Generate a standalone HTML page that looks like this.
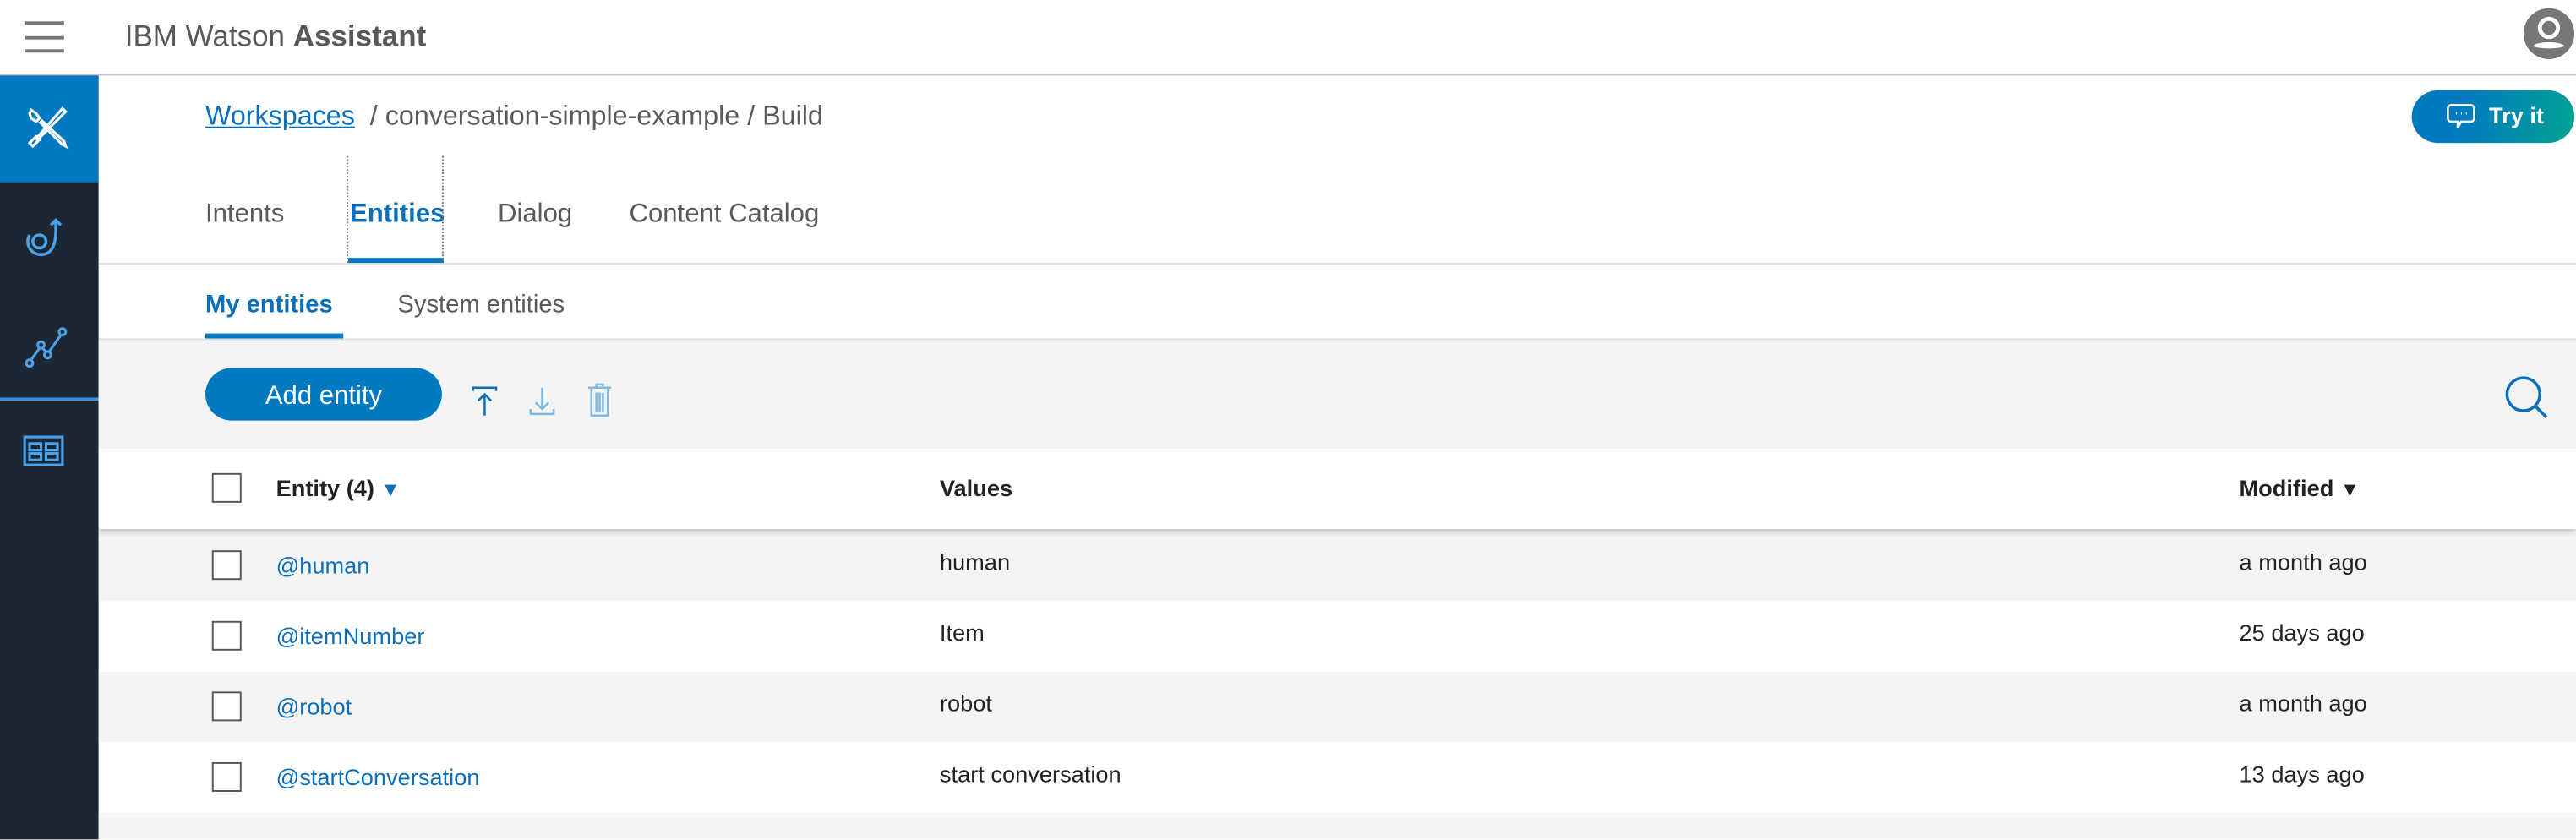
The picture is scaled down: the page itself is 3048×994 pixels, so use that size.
<!DOCTYPE html>
<html><head><meta charset="utf-8">
<style>
html,body{margin:0;padding:0;overflow:hidden;background:#fff;}
body{width:3048px;height:994px;}
#w{position:absolute;left:0;top:0;width:1568px;height:511px;transform:scale(1.94388);transform-origin:0 0;font-family:"Liberation Sans",sans-serif;color:#3d3d3d;}
.a{position:absolute;}
.t{position:absolute;white-space:nowrap;line-height:1;}
</style></head><body><div id="w">
<!-- header -->
<div class="a" style="left:0;top:0;width:1568px;height:45px;background:#fff;border-bottom:1px solid #c4c4c4;"></div>
<div class="a" style="left:15px;top:13px;width:24px;height:2px;background:#777"></div>
<div class="a" style="left:15px;top:22px;width:24px;height:2px;background:#777"></div>
<div class="a" style="left:15px;top:30px;width:24px;height:2px;background:#777"></div>
<div class="t" style="left:76px;top:13px;font-size:18px;color:#595959;">IBM Watson <b>Assistant</b></div>
<svg class="a" style="left:1536px;top:5px" width="31" height="31" viewBox="0 0 31 31"><circle cx="15.5" cy="15.5" r="15.5" fill="#777"/><circle cx="15.5" cy="12" r="5.5" fill="none" stroke="#fff" stroke-width="2.5"/><path d="M6 23c2-3 17-3 19 0c-2 2-17 2-19 0z" fill="#fff"/></svg>
<!-- sidebar -->
<div class="a" style="left:0;top:46px;width:60px;height:465px;background:#1d2733"></div>
<div class="a" style="left:0;top:46px;width:60px;height:65px;background:#0079c1"></div>
<div class="a" style="left:0;top:242px;width:60px;height:2px;background:#3c8fd6"></div>
<svg class="a" style="left:14px;top:63px" width="30" height="30" viewBox="0 0 30 30" fill="none" stroke="#fff" stroke-width="1.6"><path d="M5 4l3 2 2 3-2 2-3-2-1-3zM10 11l14 14 2 1-1-3-14-13"/><path d="M24 3l2 2-15 15-3 0 1 3-3 3-2-2 3-3 3 1 0-3z"/></svg>
<svg class="a" style="left:14px;top:130px" width="30" height="30" viewBox="0 0 30 30" fill="none" stroke="#4aa3ea" stroke-width="1.8"><circle cx="10" cy="17" r="4"/><path d="M20 10c0 10-3 15-9 15a8 8 0 0 1-7-12M20 10v-6M17 7l3-3 3 3"/></svg>
<svg class="a" style="left:14px;top:196px" width="30" height="30" viewBox="0 0 30 30" fill="none" stroke="#4aa3ea" stroke-width="1.6"><circle cx="4" cy="25" r="2"/><circle cx="11" cy="14" r="2"/><circle cx="15" cy="20" r="2"/><circle cx="24" cy="6" r="2"/><path d="M5 23l5-7M12 16l2 2M16 18l7-10"/></svg>
<svg class="a" style="left:14px;top:262px" width="26" height="26" viewBox="0 0 26 26" fill="none" stroke="#4aa3ea" stroke-width="1.6"><rect x="1" y="4" width="23" height="17"/><rect x="4" y="8" width="7" height="4"/><rect x="14" y="8" width="7" height="4"/><rect x="4" y="14" width="7" height="4"/><rect x="14" y="14" width="7" height="4"/></svg>
<!-- breadcrumb -->
<div class="t" style="left:125px;top:63px;font-size:16.6px;color:#5a5a5a;"><span style="color:#0a6fba;text-decoration:underline;">Workspaces</span>&nbsp; / conversation-simple-example / Build</div>
<div class="a" style="left:1468px;top:55px;width:99px;height:32px;border-radius:16px;background:linear-gradient(100deg,#0079c1 30%,#00a291);"></div>
<svg class="a" style="left:1489px;top:62px" width="18" height="18" viewBox="0 0 18 18" fill="none" stroke="#fff" stroke-width="1.3"><path d="M3 2h12a2 2 0 0 1 2 2v6a2 2 0 0 1-2 2H9l-2 4 0-4H3a2 2 0 0 1-2-2V4a2 2 0 0 1 2-2z"/><path d="M6 7h.5M9 7h.5M12 7h.5" stroke-width="1.5"/></svg>
<div class="t" style="left:1515px;top:63px;font-size:14px;font-weight:bold;color:#fff;">Try it</div>
<!-- tabs -->
<div class="t" style="left:125px;top:123px;font-size:16px;color:#5a5a5a;">Intents</div>
<div class="t" style="left:213px;top:123px;font-size:16px;font-weight:bold;color:#0a6fba;">Entities</div>
<div class="t" style="left:303px;top:123px;font-size:16px;color:#5a5a5a;">Dialog</div>
<div class="t" style="left:383px;top:123px;font-size:16px;color:#5a5a5a;">Content Catalog</div>
<div class="a" style="left:211px;top:95px;width:59px;height:65px;border:1px dotted #777;border-top:none;box-sizing:border-box;"></div>
<div class="a" style="left:212px;top:157px;width:58px;height:3px;background:#0079c1"></div>
<div class="a" style="left:60px;top:160px;width:1508px;height:1px;background:#dcdcdc"></div>
<div class="t" style="left:125px;top:178px;font-size:15px;font-weight:bold;color:#0a6fba;">My entities</div>
<div class="t" style="left:242px;top:178px;font-size:15px;color:#5a5a5a;">System entities</div>
<div class="a" style="left:125px;top:203px;width:84px;height:4px;background:#0079c1"></div>
<div class="a" style="left:60px;top:206px;width:1508px;height:1px;background:#dcdcdc"></div>
<!-- toolbar -->
<div class="a" style="left:60px;top:207px;width:1508px;height:66px;background:#f4f4f4"></div>
<div class="a" style="left:125px;top:224px;width:144px;height:32px;border-radius:16px;background:#0079c1"></div>
<div class="t" style="left:125px;top:234px;width:144px;text-align:center;font-size:16px;color:#fff;">Add entity</div>
<svg class="a" style="left:286px;top:234px" width="18" height="20" viewBox="0 0 18 20" fill="none" stroke="#0a6fba" stroke-width="1.3"><path d="M2 4V2h14v2M9 19V6M5 10l4-4 4 4"/></svg>
<svg class="a" style="left:321px;top:234px" width="18" height="20" viewBox="0 0 18 20" fill="none" stroke="#7fb8e0" stroke-width="1.3"><path d="M2 15v3h14v-3M9 2v13M5 11l4 4 4-4"/></svg>
<svg class="a" style="left:357px;top:232px" width="16" height="22" viewBox="0 0 16 22" fill="none" stroke="#7fb8e0" stroke-width="1.3"><path d="M1 4h14M6 4V2h4v2M3 4v17h10V4M6 7v12M8 7v12M10 7v12"/></svg>
<svg class="a" style="left:1524px;top:228px" width="28" height="28" viewBox="0 0 28 28" fill="none" stroke="#0a6fba" stroke-width="1.8"><circle cx="12" cy="12" r="10"/><path d="M19 19l7 7"/></svg>
<!-- table header -->
<div class="a" style="left:60px;top:273px;width:1508px;height:49px;background:#fff;box-shadow:0 2px 3px rgba(0,0,0,0.18);z-index:2"></div>
<div class="a" style="left:129px;top:288px;width:18px;height:18px;border:1.5px solid #555;box-sizing:border-box;background:#fff;z-index:3"></div>
<div class="t" style="left:168px;top:290px;font-size:14px;font-weight:bold;color:#222;z-index:3">Entity (4) <span style="color:#0a6fba;font-size:12px;">&#9660;</span></div>
<div class="t" style="left:572px;top:290px;font-size:14px;font-weight:bold;color:#222;z-index:3">Values</div>
<div class="t" style="left:1363px;top:290px;font-size:14px;font-weight:bold;color:#222;z-index:3">Modified <span style="font-size:12px;">&#9660;</span></div>
<!-- rows -->
<div class="a" style="left:60px;top:322px;width:1508px;height:44px;background:#f4f4f4"></div>
<div class="a" style="left:60px;top:409px;width:1508px;height:43px;background:#f4f4f4"></div>
<div class="a" style="left:60px;top:495px;width:1508px;height:16px;background:#f4f4f4"></div>
<div class="a" style="left:129px;top:335px;width:18px;height:18px;border:1.5px solid #555;box-sizing:border-box;background:#fff"></div>
<div class="a" style="left:129px;top:378px;width:18px;height:18px;border:1.5px solid #555;box-sizing:border-box;background:#fff"></div>
<div class="a" style="left:129px;top:421px;width:18px;height:18px;border:1.5px solid #555;box-sizing:border-box;background:#fff"></div>
<div class="a" style="left:129px;top:464px;width:18px;height:18px;border:1.5px solid #555;box-sizing:border-box;background:#fff"></div>
<div class="t" style="left:168px;top:337px;font-size:14px;color:#0a6fba">@human</div>
<div class="t" style="left:168px;top:380px;font-size:14px;color:#0a6fba">@itemNumber</div>
<div class="t" style="left:168px;top:423px;font-size:14px;color:#0a6fba">@robot</div>
<div class="t" style="left:168px;top:466px;font-size:14px;color:#0a6fba">@startConversation</div>
<div class="t" style="left:572px;top:335px;font-size:14px;color:#222">human</div>
<div class="t" style="left:572px;top:378px;font-size:14px;color:#222">Item</div>
<div class="t" style="left:572px;top:421px;font-size:14px;color:#222">robot</div>
<div class="t" style="left:572px;top:464px;font-size:14px;color:#222">start conversation</div>
<div class="t" style="left:1363px;top:335px;font-size:14px;color:#222">a month ago</div>
<div class="t" style="left:1363px;top:378px;font-size:14px;color:#222">25 days ago</div>
<div class="t" style="left:1363px;top:421px;font-size:14px;color:#222">a month ago</div>
<div class="t" style="left:1363px;top:464px;font-size:14px;color:#222">13 days ago</div>
</div></body></html>
